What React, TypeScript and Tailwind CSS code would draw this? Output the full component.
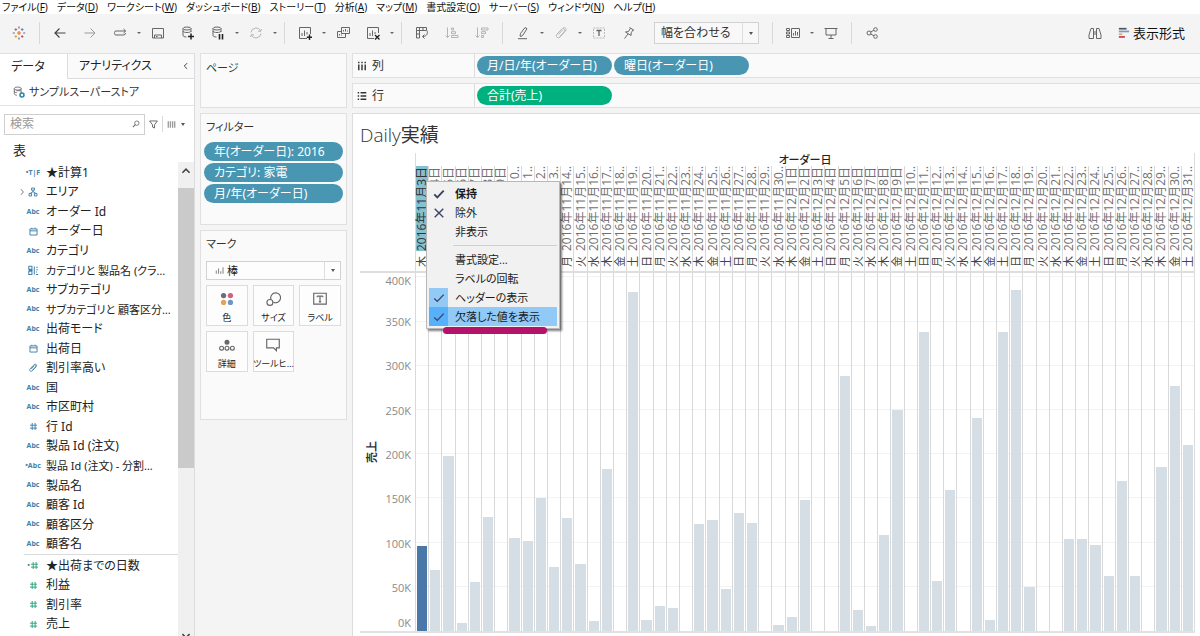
import { useState } from 'react'
import type { ReactNode } from 'react'

const menus = [
  ['ファイル', 'F'],
  ['データ', 'D'],
  ['ワークシート', 'W'],
  ['ダッシュボード', 'B'],
  ['ストーリー', 'T'],
  ['分析', 'A'],
  ['マップ', 'M'],
  ['書式設定', 'O'],
  ['サーバー', 'S'],
  ['ウィンドウ', 'N'],
  ['ヘルプ', 'H'],
]

type FieldKind = 'abc' | 'calcAbc' | 'bool' | 'geo' | 'date' | 'cluster' | 'set' | 'number' | 'calcNumber'

const dimensions: [FieldKind, string][] = [
  ['bool', '★計算1'],
  ['geo', 'エリア'],
  ['abc', 'オーダー Id'],
  ['date', 'オーダー日'],
  ['abc', 'カテゴリ'],
  ['cluster', 'カテゴリと 製品名 (クラ…'],
  ['abc', 'サブカテゴリ'],
  ['abc', 'サブカテゴリと 顧客区分…'],
  ['abc', '出荷モード'],
  ['date', '出荷日'],
  ['set', '割引率高い'],
  ['abc', '国'],
  ['abc', '市区町村'],
  ['number', '行 Id'],
  ['abc', '製品 Id (注文)'],
  ['calcAbc', '製品 Id (注文) - 分割…'],
  ['abc', '製品名'],
  ['abc', '顧客 Id'],
  ['abc', '顧客区分'],
  ['abc', '顧客名'],
]

const measures: [FieldKind, string][] = [
  ['calcNumber', '★出荷までの日数'],
  ['number', '利益'],
  ['number', '割引率'],
  ['number', '売上'],
]

// Daily sales in thousands, Nov 3 - Dec 31
const sales = [
  96, 69, 198, 9, 55, 129, 0, 105, 102, 151, 72, 128, 76, 11, 183, 0, 383, 12, 28, 26,
  0, 121, 126, 47, 134, 122, 0, 7, 16, 148, 0, 0, 289, 24, 6, 109, 250, 0, 338, 57,
  160, 0, 241, 12, 338, 386, 50, 0, 0, 104, 104, 97, 62, 170, 62, 0, 186, 277, 211,
]
const axisMax = 405
const gridValues = [50, 100, 150, 200, 250, 300, 350, 400]
const ticks = ['350K', '300K', '250K', '200K', '150K', '100K', '50K']

const weekdays = ['日', '月', '火', '水', '木', '金', '土']

const days = sales.map((value, i) => {
  const date = new Date(2016, 10, 3 + i)
  const d = date.getDate()
  return {
    value,
    label: `2016年${date.getMonth() + 1}月${d < 10 ? `${d}日` : `${d}..`}`,
    weekday: weekdays[date.getDay()],
  }
})

function Svg({ children, size = 14, className = '' }: { children: ReactNode; size?: number; className?: string }) {
  return (
    <svg
      width={size}
      height={size}
      viewBox="0 0 14 14"
      fill="none"
      stroke="currentColor"
      strokeWidth="1"
      className={className}
      aria-hidden="true"
    >
      {children}
    </svg>
  )
}

function Tool({ label, disabled, children }: { label: string; disabled?: boolean; children: ReactNode }) {
  return (
    <button
      aria-label={label}
      disabled={disabled}
      className="flex h-6 w-[30px] shrink-0 items-center justify-center text-[#666] disabled:text-[#b4b4b4]"
    >
      <Svg>{children}</Svg>
    </button>
  )
}

function Caret({ label }: { label: string }) {
  return (
    <button aria-label={label} className="flex h-6 w-2 shrink-0 items-center justify-center">
      <span className="border-x-2 border-t-2 border-x-transparent border-t-[#666]" />
    </button>
  )
}

function Separator() {
  return (
    <div className="flex w-[11px] shrink-0 justify-center">
      <span className="h-[22px] w-px bg-[#d8d8d8]" />
    </div>
  )
}

function Toolbar() {
  return (
    <div className="flex h-[38px] shrink-0 items-center bg-[#f4f4f4] pl-1">
      <Tool label="スタートページ">
        <g strokeWidth="1.2">
          <path d="M7 5v4M5 7h4" stroke="#e8762c" />
          <path d="M3.8 2.2v2.6M2.5 3.5h2.6M10.2 9.2v2.6M8.9 10.5h2.6" stroke="#c4586c" />
          <path d="M10.2 2.2v2.6M8.9 3.5h2.6" stroke="#5b879b" />
          <path d="M3.8 9.2v2.6M2.5 10.5h2.6" stroke="#e8a33c" />
          <path d="M7 .5v2M7 11.5v2M.8 7h2M11.2 7h2" stroke="#5c6692" />
        </g>
      </Tool>
      <Separator />
      <Tool label="元に戻す">
        <path d="M12.5 7H2M6.5 2.5L2 7l4.5 4.5" strokeWidth="1.2" stroke="#444" />
      </Tool>
      <Tool label="やり直し">
        <path d="M1.5 7H12M7.5 2.5L12 7l-4.5 4.5" stroke="#999" />
      </Tool>
      <Tool label="再生">
        <path d="M10.500 9H3a1.500 1.500 0 0 1-1.500-1.500v-1A1.500 1.500 0 0 1 3 5h9.500M10.500 3l2.200 2-2.200 2M10.500 9a2 2 0 0 0 2-2" />
      </Tool>
      <Caret label="再生オプション" />
      <Tool label="保存">
        <path d="M1.5 2.5h11v9.5h-11zM3.500 12V9h7v3M5 10.5h1.5" />
      </Tool>
      <Tool label="新しいデータソース">
        <ellipse cx="6" cy="2.5" rx="4" ry="1.5" />
        <path d="M2 2.5v7c0 .8 1.5 1.5 3.5 1.5M10 2.5V6M2 5c0 2 8 2 8 0" />
        <path d="M10 7.5v6M7 10.5h6" stroke="#222" strokeWidth="1.5" />
      </Tool>
      <Tool label="自動更新の一時停止">
        <ellipse cx="6" cy="2.5" rx="4" ry="1.5" />
        <path d="M2 2.5v7c0 .8 1.5 1.5 3.5 1.5M10 2.5V6M2 5c0 2 8 2 8 0" />
        <path d="M8.5 8v5.5M11.5 8v5.5" stroke="#222" strokeWidth="1.6" />
      </Tool>
      <Caret label="自動更新オプション" />
      <Tool label="更新" disabled>
        <path d="M2 6.5A5 5 0 0 1 11.5 5M12 7.5A5 5 0 0 1 2.500 9M12.5 3L11.5 5.5 9 5M1.5 11l1-2.500 2.500.5" />
      </Tool>
      <Caret label="更新オプション" />
      <Separator />
      <Tool label="新しいワークシート">
        <path d="M9 12.5H1.5v-11h11V8M4 10V7M6.5 10V4.5M9 8.5V6" />
        <path d="M11.5 8.5v5.500M8.800 11.200h5.200" stroke="#222" strokeWidth="1.4" />
      </Tool>
      <Caret label="ワークシートオプション" />
      <Tool label="複製">
        <path d="M5.5 1.5h8v6h-8zM5.5 5.5h-4v6h8v-4M7.5 5.5V4M9.5 5.5V3M11.5 5.5V4.5M3.5 9.5V8M5.5 9.5v-1" />
      </Tool>
      <Tool label="シートのクリア">
        <path d="M8 12.5H1.5v-11h11V7M4 10V7M6.5 10V4.5M9 8V6" />
        <path d="M9 9l4.5 4.5M13.5 9L9 13.5" stroke="#222" strokeWidth="1.4" />
      </Tool>
      <Caret label="クリアオプション" />
      <Separator />
      <Tool label="行と列の交換">
        <path d="M1.5 1.5h3v3h-3zM4.5 1.5h7v3h-7zM8 1.5v3M1.5 4.5h3v7.500h-3zM1.500 8h3M12 4.500c1 2 .5 6-4.500 6M9.500 8.500l-2 2 2 2" />
      </Tool>
      <Tool label="昇順で並べ替え" disabled>
        <path d="M2.5 1.5v10M.5 9.5l2 2 2-2M6.5 2h2v2h-2zM6.5 5.7h4v2h-4zM6.5 9.5H13v2H6.5z" />
      </Tool>
      <Tool label="降順で並べ替え" disabled>
        <path d="M2.5 1.5v10M.5 9.5l2 2 2-2M6.5 2H13v2H6.5zM6.5 5.7h4v2h-4zM6.5 9.5h2v2h-2z" />
      </Tool>
      <Separator />
      <Tool label="ハイライト">
        <path d="M4 10l.5-2.5L9 1.500l2 1.200L7 9l-2 1.500zM2 12.7h9" />
      </Tool>
      <Caret label="ハイライトオプション" />
      <Tool label="グループメンバー" disabled>
        <path d="M4.5 8.500l4-4.500M6 10.500L10 6c2-2.500-1-4.500-2.700-2.500L3 8.200c-2 2.500 1 4.800 3 2.800l5.500-6.200c1.500-2-.5-4-2.500-2.800" />
      </Tool>
      <Caret label="グループオプション" />
      <Tool label="マークラベルの表示">
        <path d="M1.5 2h11v10h-11z" stroke="#bbb" strokeDasharray="2 1" />
        <path d="M4.5 4.5h5M7 4.5V10" strokeWidth="1.3" />
      </Tool>
      <Tool label="軸の固定">
        <path d="M7.5 1.5l4.5 2.800M8.500 2.200L6.500 5.500l-3 .5 5.500 3.500.3-3L11.200 4M6 8l-3.500 4.500" />
      </Tool>
      <label className="ml-[10px] flex h-[22px] w-[105px] shrink-0 items-stretch border border-[#d2d2d2] bg-[#f8f8f8]">
        <select
          aria-label="表示サイズ"
          className="min-w-0 flex-1 appearance-none pl-[6px] text-xs leading-5 text-[#333] outline-none"
        >
          <option>幅を合わせる</option>
          <option>標準</option>
          <option>ビュー全体</option>
        </select>
        <span className="flex w-4 items-center justify-center border-l border-[#dedede]">
          <span className="border-x-2 border-t-[3px] border-x-transparent border-t-[#555]" />
        </span>
      </label>
      <div className="w-2" />
      <Separator />
      <Tool label="カードの表示">
        <path d="M5.5 2.5h8v9h-8zM7.5 9.5V7M9.5 9.5V5M11.5 9.5V6M.5 2.5h3v2h-3zM.5 6h3v2h-3zM.5 9.5h3v2h-3z" />
      </Tool>
      <Caret label="カードオプション" />
      <Tool label="プレゼンテーションモード">
        <path d="M.5 2.500h13M2 2.500v6.500h10V2.500M7 9v3M4.500 12.500h5" />
      </Tool>
      <Separator />
      <Tool label="共有">
        <circle cx="4" cy="7" r="2" />
        <circle cx="10.5" cy="3.5" r="1.8" />
        <circle cx="10.5" cy="10.5" r="1.8" />
        <path d="M5.7 6l3.2-1.700M5.700 8l3.200 1.700" />
      </Tool>
      <div className="ml-auto flex items-center gap-2 pr-[15px]">
        <Tool label="データガイド">
          <path d="M1 12.5V9l2-6.500h2.500v10zM13 12.500V9l-2-6.500H8.500v10zM5.500 6h3M5.500 8h3" />
        </Tool>
        <button className="flex items-center gap-[3px] text-[13px] leading-5 text-[#111]">
          <Svg size={12}>
            <path d="M1 2h9" stroke="#555" strokeWidth="2" />
            <path d="M1 5.2h12" stroke="#6f9fc9" strokeWidth="2" />
            <path d="M1 8.4h4" stroke="#f0a860" strokeWidth="2" />
            <path d="M1 11.6h7" stroke="#c8395c" strokeWidth="2" />
          </Svg>
          表示形式
        </button>
      </div>
    </div>
  )
}

function FieldIcon({ kind }: { kind: FieldKind }) {
  switch (kind) {
    case 'abc':
      return <span className="text-[7px] font-bold">Abc</span>
    case 'calcAbc':
      return <span className="text-[7px] font-bold">•Abc</span>
    case 'bool':
      return <span className="text-[7px] font-bold">•T|F</span>
    case 'geo':
      return (
        <Svg size={10}>
          <path d="M5 1.5h4v3H5zM1.5 9h3.5v3.5H1.5zM9 9h3.5v3.5H9zM7 4.5v2.5M3.2 9L7 6.5 10.8 9" strokeWidth="1.4" />
        </Svg>
      )
    case 'date':
      return (
        <Svg size={9}>
          <path d="M1.5 3h11v9.5h-11zM1.5 6h11M4.5 1v2M9.5 1v2" strokeWidth="1.5" />
        </Svg>
      )
    case 'cluster':
      return (
        <Svg size={11}>
          <path d="M1 1.5h4v4H1zM1 8h4v4H1zM8 2v10M1 6.8h5M10.5 3h2M10.5 6h2M10 9h1.5M10 12h3" strokeWidth="1.3" />
        </Svg>
      )
    case 'set':
      return (
        <Svg size={10}>
          <path
            d="M4.5 8.500l4-4.500M6 10.500L10 6c2-2.500-1-4.500-2.700-2.500L3 8.200c-2 2.500 1 4.800 3 2.800l5.500-6.200c1.500-2-.5-4-2.500-2.800"
            strokeWidth="1.3"
          />
        </Svg>
      )
    case 'calcNumber':
      return (
        <>
          <span className="text-[7px] font-bold">•</span>
          <FieldIcon kind="number" />
        </>
      )
    default:
      return (
        <Svg size={9}>
          <path d="M5 1.5v11M9.5 1.5v11M1.5 5h11M1.5 9.5h11" strokeWidth="1.5" />
        </Svg>
      )
  }
}

function FieldRow({ kind, name, measure }: { kind: FieldKind; name: string; measure?: boolean }) {
  // long names drop one size so they stay clear of the scroll bar
  const size = name.length > 12 ? 'text-[11px]' : 'text-xs'

  return (
    <li className="flex min-w-0 items-center">
      <span className="flex w-[18px] shrink-0 justify-end pr-[2px] text-[#666]">
        {kind === 'geo' && (
          <Svg size={8} className="mr-[-10px]">
            <path d="M5 2l4.500 5L5 12" strokeWidth="1.5" />
          </Svg>
        )}
      </span>
      <span
        className={`ml-[6px] flex w-[18px] shrink-0 items-center justify-center ${measure ? 'text-[#2fa37c]' : 'text-[#4383ab]'}`}
      >
        <FieldIcon kind={kind} />
      </span>
      <button className={`ml-1 leading-[18px] whitespace-nowrap text-[#222] ${size}`}>{name}</button>
    </li>
  )
}

function DataPane() {
  const [query, setQuery] = useState('')

  return (
    <aside className="flex w-[195px] shrink-0 flex-col border-r border-[#dcdcdc] bg-white">
      <div className="flex h-[26px] shrink-0 border-t border-[#e0e0e0]">
        <button className="w-[67px] pr-[11px] text-xs leading-6 text-[#222]">データ</button>
        <button className="flex flex-1 items-center justify-between border-b border-l border-[#dcdcdc] bg-[#fafafa] pr-1 pl-[11px] text-xs text-[#222]">
          アナリティクス
          <Svg size={8}>
            <path d="M9 2L4 7l5 5" strokeWidth="1.5" />
          </Svg>
        </button>
      </div>
      <button className="flex h-[27px] shrink-0 items-center gap-1 border-b border-[#e4e4e4] pl-[13px] text-[11px] text-[#333]">
        <Svg size={12} className="text-[#666]">
          <ellipse cx="5.5" cy="3" rx="4" ry="1.8" />
          <path d="M1.5 3v6c0 1 1.5 1.8 3 1.8M9.5 3v2M1.5 6c0 1.2 1.5 1.8 3 1.8M4 5.5h5.5v4" />
          <circle cx="10.5" cy="10.5" r="2.3" stroke="#2f83ac" strokeWidth="1.8" />
        </Svg>
        サンプルスーパーストア
      </button>
      <div className="flex h-9 shrink-0 items-center gap-1 pl-1 text-[#666]">
        <label className="flex h-[21px] w-[141px] items-center border border-[#cfcfcf] pr-1 pl-[5px]">
          <input
            type="text"
            aria-label="検索"
            placeholder="検索"
            value={query}
            onChange={(e) => setQuery(e.target.value)}
            className="min-w-0 flex-1 text-xs leading-[18px] text-[#333] outline-none placeholder:text-[#999]"
          />
          <Svg size={8}>
            <circle cx="8.5" cy="5.5" r="3.8" strokeWidth="1.4" />
            <path d="M5.8 8.2L1.5 12.5" strokeWidth="1.8" />
          </Svg>
        </label>
        <button aria-label="フィルター">
          <Svg size={9}>
            <path d="M1 1.5h12L8.5 7.5v5l-3-1.5V7.5z" strokeWidth="1.5" />
          </Svg>
        </button>
        <button aria-label="表示の切り替え" className="flex h-4 items-center gap-[5px] border-l border-[#d8d8d8] pl-1">
          <Svg size={9}>
            <path d="M2 2v10M5.300 2v10M8.700 2v10M12 2v10" strokeWidth="2" stroke="#999" />
          </Svg>
          <span className="border-x-2 border-t-[3px] border-x-transparent border-t-[#555]" />
        </button>
      </div>
      <h2 className="h-5 shrink-0 pl-[13px] text-[13px] leading-4 text-[#222]">表</h2>
      <div className="flex min-h-0 flex-1 overflow-hidden">
        <div className="min-w-0 flex-1 pt-px">
          <ul className="grid h-[391px] auto-rows-fr">
            {dimensions.map(([kind, name]) => (
              <FieldRow key={name} kind={kind} name={name} />
            ))}
          </ul>
          <ul className="ml-6 grid h-20 auto-rows-fr border-t border-[#dcdcdc] pt-px [&>li]:-ml-6">
            {measures.map(([kind, name]) => (
              <FieldRow key={name} kind={kind} name={name} measure />
            ))}
          </ul>
        </div>
        <div className="flex w-4 shrink-0 flex-col bg-[#f0f0f0]">
          <button aria-label="上へスクロール" className="flex h-[26px] shrink-0 items-start justify-center pt-1 text-[#444]">
            <Svg size={10}>
              <path d="M2 9.5l5-5 5 5" strokeWidth="2.2" />
            </Svg>
          </button>
          <div className="h-[280px] shrink-0 bg-[#cacaca]" />
          <button aria-label="下へスクロール" className="mt-auto flex h-1 shrink-0 justify-center overflow-hidden text-[#444]">
            <Svg size={10} className="shrink-0">
              <path d="M2 3l5 5 5-5" strokeWidth="2.2" />
            </Svg>
          </button>
        </div>
      </div>
    </aside>
  )
}

function Pill({ children, green, fixed }: { children: ReactNode; green?: boolean; fixed?: boolean }) {
  return (
    <button
      className={`h-[19px] rounded-full pl-[10px] text-left text-xs leading-[19px] text-white ${green ? 'bg-[#00b180]' : 'bg-[#4996b2]'} ${fixed ? 'w-[135px]' : 'w-full'}`}
    >
      {children}
    </button>
  )
}

function MarkButton({ label, children }: { label: string; children: ReactNode }) {
  return (
    <button className="flex h-[41px] min-w-0 flex-col items-center justify-between border border-[#dcdcdc] bg-[#fdfdfd] pt-[5px] text-[9px] leading-[14px] whitespace-nowrap text-[#222]">
      <span className="text-[#666]">
        <Svg size={16}>{children}</Svg>
      </span>
      {label}
    </button>
  )
}

function Cards() {
  return (
    <div className="ml-[5px] flex w-[147px] shrink-0 flex-col gap-[5px]">
      <section className="h-[55px] border border-[#e0e0e0] bg-[#fafafa] pt-[5px] pl-[5px]">
        <h2 className="text-[11px] leading-[18px] text-[#333]">ページ</h2>
      </section>
      <section className="h-[112px] border border-[#e0e0e0] bg-[#fafafa] px-[3px] pt-1">
        <h2 className="pl-[2px] text-[11px] leading-[18px] text-[#333]">フィルター</h2>
        <div className="mt-[6px] flex flex-col gap-[2px]">
          <Pill>年(オーダー日): 2016</Pill>
          <Pill>カテゴリ: 家電</Pill>
          <Pill>月/年(オーダー日)</Pill>
        </div>
      </section>
      <section className="h-[190px] border border-[#e0e0e0] bg-[#fafafa] px-[5px] pt-1">
        <h2 className="text-[11px] leading-[18px] text-[#333]">マーク</h2>
        <label className="mt-2 flex h-[19px] items-stretch border border-[#d2d2d2] bg-[#fdfdfd] pl-2">
          <Svg size={9} className="self-center text-[#888]">
            <path d="M2 12V7M5.5 12V4M9 12V8M12.5 12V2" strokeWidth="1.6" />
          </Svg>
          <select
            aria-label="マークの種類"
            className="min-w-0 flex-1 appearance-none pl-[3px] text-[11px] leading-[17px] text-[#222] outline-none"
          >
            <option>棒</option>
            <option>線</option>
            <option>円</option>
          </select>
          <span className="flex w-4 items-center justify-center border-l border-[#dedede]">
            <span className="border-x-2 border-t-[3px] border-x-transparent border-t-[#555]" />
          </span>
        </label>
        <div className="mt-[5px] grid grid-cols-3 gap-[5px]">
          <MarkButton label="色">
            <g stroke="none">
              <circle cx="4" cy="4" r="2.3" fill="#6b6b80" />
              <circle cx="10" cy="4" r="2.3" fill="#cf6278" />
              <circle cx="4" cy="10" r="2.3" fill="#e3a35c" />
              <circle cx="10" cy="10" r="2.3" fill="#6a97c8" />
            </g>
          </MarkButton>
          <MarkButton label="サイズ">
            <path d="M5.3 7.5A4.3 4.3 0 1 1 7.4 9.8" />
            <circle cx="4.3" cy="10" r="2.6" />
          </MarkButton>
          <MarkButton label="ラベル">
            <path d="M1.5 2h11v9.5h-11zM4.5 4.5h5M7 4.5V9.5M4.5 4.5v1M9.5 4.5v1M6 9.5h2" />
          </MarkButton>
          <MarkButton label="詳細">
            <circle cx="7" cy="4.5" r="1.7" fill="currentColor" />
            <circle cx="2.3" cy="9.8" r="1.7" />
            <circle cx="7" cy="9.8" r="1.7" />
            <circle cx="11.7" cy="9.8" r="1.7" />
          </MarkButton>
          <MarkButton label="ツールヒ…">
            <path d="M1.5 2h11v7.5H10V12L7.5 9.5h-6z" />
          </MarkButton>
        </div>
      </section>
    </div>
  )
}

function Shelf({ name, icon, children }: { name: string; icon: ReactNode; children: ReactNode }) {
  return (
    <div className="flex h-[25px] shrink-0 items-stretch border-y border-l border-[#e0e0e0] bg-[#fafafa]">
      <div className="flex w-[122px] shrink-0 items-center gap-[5px] border-r border-[#dcdcdc] pl-1 text-xs text-[#333]">
        {icon}
        {name}
      </div>
      <div className="flex items-center gap-[2px] pl-[2px]">{children}</div>
    </div>
  )
}

const menuItems = [
  { label: '保持', mark: 'check', bold: true },
  { label: '除外', mark: 'cross' },
  { label: '非表示' },
  null,
  { label: '書式設定...' },
  { label: 'ラベルの回転' },
  { label: 'ヘッダーの表示', mark: 'check', on: true },
  { label: '欠落した値を表示', mark: 'check', on: true, active: true },
]

function ContextMenu() {
  return (
    <div
      role="menu"
      className="absolute top-[67px] left-[73px] w-[134px] border border-[#b8b8b8] bg-[#f1f1f1] p-[2px] shadow-[2px_2px_2px_rgba(0,0,0,0.5)]"
    >
      {menuItems.map((item, i) =>
        item === null ? (
          <hr key={i} className="my-1 ml-6 border-[#d0d0d0]" />
        ) : (
          <button
            key={i}
            role="menuitem"
            className={`flex h-[19px] w-full items-center text-[11px] leading-[19px] text-[#1a1a1a] ${item.bold ? 'font-bold' : ''} ${item.active ? 'bg-[#91c9f7]' : ''}`}
          >
            <span
              className={`flex h-full w-[19px] items-center justify-center text-[#3b4261] ${item.active ? 'bg-[#56b0fa]' : item.on ? 'bg-[#91c9f7]' : ''}`}
            >
              {item.mark === 'check' && (
                <Svg size={12}>
                  <path d="M1.5 7.5L5 11l7.5-8" strokeWidth={item.on ? '1.5' : '2.2'} />
                </Svg>
              )}
              {item.mark === 'cross' && (
                <Svg size={12}>
                  <path d="M2 2l10 10M12 2L2 12" strokeWidth="1.6" />
                </Svg>
              )}
            </span>
            <span className="pl-[7px]">{item.label}</span>
          </button>
        ),
      )}
      {/* Marker line under the active entry */}
      <span className="absolute -bottom-[6px] left-4 h-[7px] w-[104px] rounded-full bg-[#b5126a]" />
    </div>
  )
}

function Sheet() {
  return (
    <section className="relative flex min-h-0 flex-1 flex-col border-t border-l border-[#dcdcdc] bg-white pr-[5px] pb-[3px] pl-[7px] [font-family:'Open_Sans','Noto_Sans_CJK_JP',sans-serif]">
      <h1 className="h-[39px] shrink-0 pt-[9px] text-[19px] leading-6 font-light text-[#333]">
        Daily<span className="font-normal">実績</span>
      </h1>
      <div className="flex shrink-0 border-b-2 border-[#dedede]">
        <div className="w-[55px] shrink-0" />
        <div className="min-w-0 flex-1 border-x border-[#dcdcdc]">
          <div className="h-[13px] text-center text-[11px] leading-[14px] font-medium text-[#222]">オーダー日</div>
          <div className="-ml-px flex">
            {days.map((day, i) => (
              <div key={i} className="flex min-w-0 flex-1 flex-col border-l border-[#d9d9d9]">
                <div className={`flex h-[85px] justify-center ${i === 0 ? 'bg-[#86c1d1] text-[#333]' : 'text-[#707070]'}`}>
                  <span className="shrink-0 rotate-180 text-xs leading-[12px] whitespace-nowrap [text-orientation:sideways] [writing-mode:vertical-rl]">
                    {day.label}
                  </span>
                </div>
                <div className="flex h-5 items-center justify-center text-[#444]">
                  <span className="rotate-180 text-[11px] leading-[12px] [text-orientation:sideways] [writing-mode:vertical-rl]">
                    {day.weekday}
                  </span>
                </div>
              </div>
            ))}
          </div>
        </div>
      </div>
      <div className="flex min-h-0 flex-1 border-b-2 border-[#e2e2e2]">
        <div className="flex w-[23px] shrink-0 items-center justify-center">
          <span className="rotate-180 text-[11px] leading-4 font-bold text-[#333] [text-orientation:sideways] [writing-mode:vertical-rl]">
            売上
          </span>
        </div>
        <div className="flex w-8 shrink-0 flex-col items-end pr-1 text-[11px] leading-4 text-[#8a8a8a]">
          <div className="h-[27px]">400K</div>
          <div className="grid flex-1 auto-rows-fr items-center justify-items-end">
            {ticks.map((tick) => (
              <div key={tick}>{tick}</div>
            ))}
          </div>
          <div className="flex h-[21px] items-end">0K</div>
        </div>
        <div className="relative flex min-w-0 flex-1 border-r border-[#dcdcdc]">
          {gridValues.map((v) => (
            <div
              key={v}
              className="absolute inset-x-0 h-px bg-[#f3f3f3]"
              style={{ bottom: `${(v / axisMax) * 100}%` }}
            />
          ))}
          {days.map((day, i) => (
            <div key={i} className="relative flex min-w-0 flex-1 items-end border-l border-[#d9d9d9] px-px">
              <div
                className={`w-full ${i === 0 ? 'bg-[#4a78a8]' : 'bg-[#d5dde5]'}`}
                style={{ height: `${(day.value / axisMax) * 100}%` }}
              />
            </div>
          ))}
        </div>
      </div>
      <ContextMenu />
    </section>
  )
}

export default function App() {
  return (
    <div className="flex h-screen flex-col overflow-hidden bg-[#f4f4f4] [font-family:'Noto_Sans','Noto_Sans_CJK_JP',sans-serif] [font-feature-settings:'palt']">
      <nav className="flex h-[14px] shrink-0 gap-[9px] bg-white pl-[2px]">
        {menus.map(([name, key]) => (
          <button key={key} className="text-[10px] leading-3 whitespace-nowrap text-[#111]">
            {name}(<span className="underline">{key}</span>)
          </button>
        ))}
      </nav>
      <Toolbar />
      <main className="flex min-h-0 flex-1 pt-px">
        <DataPane />
        <Cards />
        <div className="ml-[5px] flex min-w-0 flex-1 flex-col gap-[5px]">
          <Shelf
            name="列"
            icon={
              <Svg size={10}>
                <path d="M2.5 1v2M2.5 5v8M7 1v2M7 5v8M11.5 1v2M11.5 5v8" strokeWidth="2" />
              </Svg>
            }
          >
            <Pill fixed>月/日/年(オーダー日)</Pill>
            <Pill fixed>曜日(オーダー日)</Pill>
          </Shelf>
          <Shelf
            name="行"
            icon={
              <Svg size={10}>
                <path d="M1 2.5h2M5 2.5h8M1 7h2M5 7h8M1 11.5h2M5 11.5h8" strokeWidth="2" />
              </Svg>
            }
          >
            <Pill fixed green>
              合計(売上)
            </Pill>
          </Shelf>
          <Sheet />
        </div>
      </main>
    </div>
  )
}
